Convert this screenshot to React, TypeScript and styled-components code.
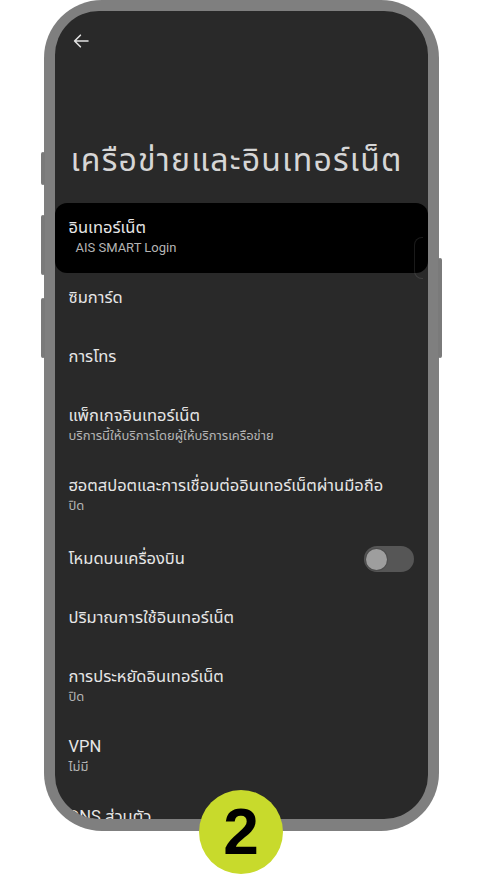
import React from 'react'
import styled, { createGlobalStyle } from 'styled-components'

const GlobalStyle = createGlobalStyle`
  html, body {
    margin: 0;
    padding: 0;
    background: #ffffff;
  }
  body {
    font-family: Roboto, "Noto Sans", "Noto Sans Thai", sans-serif;
  }
`

const Page = styled.div`
  position: relative;
  width: 482px;
  height: 875px;
  overflow: hidden;
`

const Frame = styled.div`
  position: relative;
  width: 395px;
  height: 831px;
  margin: 0 auto;
  box-sizing: border-box;
  padding: 11px 11px 12px;
  background: #7f7f7f;
  border-radius: 58px;
`

const SideKey = styled.div<{ side: 'left' | 'right'; top: number; len: number }>`
  position: absolute;
  ${({ side }) => (side === 'left' ? 'left: -3px;' : 'right: -3px;')}
  top: ${({ top }) => top}px;
  width: 4px;
  height: ${({ len }) => len}px;
  background: #7a7a7a;
  border-radius: 2px;
`

const Screen = styled.div`
  display: flex;
  flex-direction: column;
  height: 100%;
  background: #292929;
  border-radius: 44px;
  overflow: hidden;
`

const TopBar = styled.div`
  display: flex;
  align-items: center;
  height: 60px;
  padding-left: 18px;
  flex-shrink: 0;
`

const PageTitle = styled.h1`
  margin: 69px 0 23px 16px;
  font-size: 32px;
  line-height: 40px;
  letter-spacing: 1.2px;
  font-weight: 400;
  color: #d6d6d6;
  white-space: nowrap;
  flex-shrink: 0;
`

const List = styled.div`
  display: flex;
  flex-direction: column;
  flex-shrink: 0;
`

const Row = styled.div<{ $h: number; $active?: boolean }>`
  position: relative;
  display: flex;
  align-items: flex-start;
  justify-content: space-between;
  box-sizing: border-box;
  height: ${({ $h }) => $h}px;
  padding: 13px 14px 0;
  background: ${({ $active }) => ($active ? '#000000' : 'transparent')};
  border-radius: ${({ $active }) => ($active ? '12px' : '0')};
`

const Texts = styled.div`
  display: flex;
  flex-direction: column;
  min-width: 0;
`

const Title = styled.div`
  font-size: 16.5px;
  line-height: 24px;
  color: #e6e6e6;
  white-space: nowrap;
`

const Sub = styled.div<{ $indent?: number }>`
  font-size: 13px;
  line-height: 16px;
  color: #b4b4b4;
  white-space: nowrap;
  padding-left: ${({ $indent }) => $indent ?? 0}px;
`

const EdgeHint = styled.div`
  position: absolute;
  right: 5px;
  top: 34px;
  width: 8px;
  height: 40px;
  border: 1px solid rgba(255, 255, 255, 0.1);
  border-right: none;
  border-radius: 8px 0 0 8px;
`

const Toggle = styled.div`
  display: flex;
  align-items: center;
  box-sizing: border-box;
  width: 50px;
  height: 26px;
  margin-top: -1px;
  padding-left: 2px;
  background: #565656;
  border-radius: 13px;
`

const Knob = styled.div`
  width: 21px;
  height: 21px;
  border-radius: 50%;
  background: #9e9e9e;
  box-shadow: 0 0 0 1px #4c4c4c;
`

const Badge = styled.div`
  position: absolute;
  left: 199px;
  top: 790px;
  width: 84px;
  height: 84px;
  border-radius: 50%;
  background: #c8da2c;
  display: flex;
  align-items: center;
  justify-content: center;
  font-family: "Liberation Sans", Arial, sans-serif;
  font-weight: 700;
  font-size: 64px;
  line-height: 1;
  color: #000000;
`

const BackArrow = () => (
  <svg width="16" height="14" viewBox="0 0 16 14" fill="none">
    <path d="M15 7H1.6M7.4 1.2L1.6 7l5.8 5.8" stroke="#e2e2e2" strokeWidth="1.6" strokeLinecap="round" strokeLinejoin="round" />
  </svg>
)

type Item = {
  title: string
  sub?: string
  indent?: number
  h: number
  active?: boolean
  toggle?: boolean
}

const items: Item[] = [
  { title: 'อินเทอร์เน็ต', sub: 'AIS SMART Login', indent: 7, h: 70, active: true },
  { title: 'ซิมการ์ด', h: 59 },
  { title: 'การโทร', h: 59 },
  { title: 'แพ็กเกจอินเทอร์เน็ต', sub: 'บริการนี้ให้บริการโดยผู้ให้บริการเครือข่าย', h: 70 },
  { title: 'ฮอตสปอตและการเชื่อมต่ออินเทอร์เน็ตผ่านมือถือ', sub: 'ปิด', h: 73 },
  { title: 'โหมดบนเครื่องบิน', h: 59, toggle: true },
  { title: 'ปริมาณการใช้อินเทอร์เน็ต', h: 59 },
  { title: 'การประหยัดอินเทอร์เน็ต', sub: 'ปิด', h: 70 },
  { title: 'VPN', sub: 'ไม่มี', h: 70 },
  { title: 'DNS ส่วนตัว', sub: 'อัตโนมัติ', h: 70 },
]

const App = () => {
  return (
    <Page>
      <GlobalStyle />
      <Frame>
        <SideKey side="left" top={152} len={33} />
        <SideKey side="left" top={215} len={60} />
        <SideKey side="left" top={298} len={60} />
        <SideKey side="right" top={258} len={100} />
        <Screen>
          <TopBar>
            <BackArrow />
          </TopBar>
          <PageTitle>เครือข่ายและอินเทอร์เน็ต</PageTitle>
          <List>
            {items.map((it) => (
              <Row key={it.title} $h={it.h} $active={it.active}>
                <Texts>
                  <Title>{it.title}</Title>
                  {it.sub && <Sub $indent={it.indent}>{it.sub}</Sub>}
                </Texts>
                {it.toggle && (
                  <Toggle>
                    <Knob />
                  </Toggle>
                )}
                {it.active && <EdgeHint />}
              </Row>
            ))}
          </List>
        </Screen>
      </Frame>
      <Badge>2</Badge>
    </Page>
  )
}

export default App
